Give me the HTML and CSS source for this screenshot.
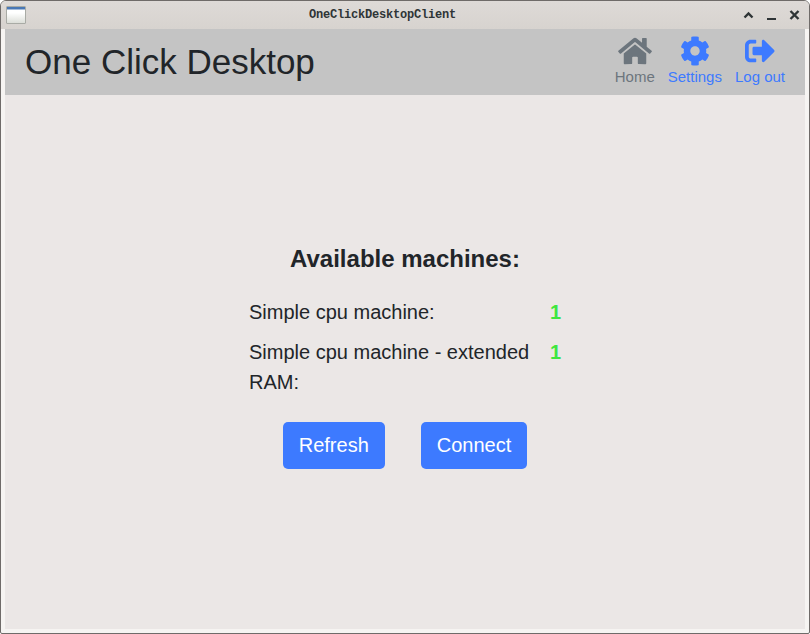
FILE: index.html
```html
<!DOCTYPE html>
<html lang="en">
<head>
<meta charset="utf-8">
<title>OneClickDesktopClient</title>
<link rel="stylesheet" href="styles.css">
</head>
<body>
<div class="window">
  <div class="titlebar">
    <span class="app-icon"></span>
    <span class="window-title">OneClickDesktopClient</span>
    <svg class="controls" width="60" height="12" viewBox="0 0 60 12" fill="none" stroke="#2e3436">
      <path d="M1.500 8.500 5.500 4.500 9.500 8.500" stroke-width="2.400"/>
      <path d="M24 10h9" stroke-width="2"/>
      <path d="M47.500 2l8 8M55.500 2l-8 8" stroke-width="2.400"/>
    </svg>
  </div>
  <div class="client">
    <header class="header">
      <h1 class="brand">One Click Desktop</h1>
      <nav class="nav">
        <a class="nav-item active">
          <svg width="34" height="30" viewBox="0 0 576 512"><path d="M280.370 148.260L96 300.110V464a16 16 0 0 0 16 16l112.060-.29a16 16 0 0 0 15.920-16V368a16 16 0 0 1 16-16h64a16 16 0 0 1 16 16v95.640a16 16 0 0 0 16 16.050L464 480a16 16 0 0 0 16-16V300L295.670 148.260a12.190 12.190 0 0 0-15.300 0zM571.600 251.470L488 182.560V44.050a12 12 0 0 0-12-12h-56a12 12 0 0 0-12 12v72.610L318.470 43a48 48 0 0 0-61 0L4.340 251.470a12 12 0 0 0-1.600 16.900l25.500 31A12 12 0 0 0 45.150 301l235.220-193.740a12.190 12.190 0 0 1 15.300 0L530.900 301a12 12 0 0 0 16.900-1.600l25.500-31a12 12 0 0 0-1.700-16.930z"/></svg>
          <span>Home</span>
        </a>
        <a class="nav-item">
          <svg width="30" height="30" viewBox="0 0 512 512"><path d="M487.400 315.700l-42.600-24.600c4.300-23.200 4.300-47 0-70.200l42.600-24.600c4.900-2.800 7.100-8.600 5.500-14-11.100-35.600-30-67.800-54.700-94.600-3.800-4.100-10-5.100-14.800-2.300L380.800 110c-17.900-15.400-38.500-27.300-60.800-35.100V25.800c0-5.600-3.900-10.500-9.400-11.700-36.700-8.200-74.300-7.800-109.200 0-5.500 1.200-9.400 6.100-9.400 11.700V75c-22.200 7.900-42.800 19.800-60.800 35.100L88.700 85.500c-4.900-2.800-11-1.900-14.800 2.300-24.700 26.700-43.600 58.900-54.700 94.600-1.700 5.400.6 11.200 5.500 14L67.300 221c-4.300 23.200-4.300 47 0 70.200l-42.600 24.600c-4.900 2.800-7.100 8.600-5.500 14 11.100 35.600 30 67.800 54.700 94.600 3.800 4.100 10 5.100 14.800 2.300l42.600-24.600c17.900 15.400 38.500 27.300 60.800 35.100v49.200c0 5.600 3.900 10.500 9.400 11.700 36.700 8.200 74.300 7.800 109.200 0 5.500-1.200 9.400-6.100 9.400-11.700v-49.200c22.200-7.900 42.800-19.800 60.800-35.100l42.600 24.600c4.900 2.800 11 1.900 14.800-2.300 24.700-26.700 43.600-58.900 54.700-94.600 1.500-5.500-.7-11.300-5.600-14.100zM256 336c-44.100 0-80-35.900-80-80s35.900-80 80-80 80 35.900 80 80-35.900 80-80 80z"/></svg>
          <span>Settings</span>
        </a>
        <a class="nav-item">
          <svg width="30" height="30" viewBox="0 0 512 512"><path d="M497 273L329 441c-15 15-41 4.500-41-17v-96H152c-13.300 0-24-10.700-24-24v-96c0-13.300 10.700-24 24-24h136V88c0-21.400 25.900-32 41-17l168 168c9.300 9.400 9.300 24.600 0 34zM192 436v-40c0-6.600-5.400-12-12-12H96c-17.700 0-32-14.300-32-32V160c0-17.700 14.300-32 32-32h84c6.600 0 12-5.400 12-12V76c0-6.600-5.400-12-12-12H96c-53 0-96 43-96 96v192c0 53 43 96 96 96h84c6.600 0 12-5.400 12-12z"/></svg>
          <span>Log out</span>
        </a>
      </nav>
    </header>
    <main class="main">
      <h2 class="heading">Available machines:</h2>
      <div class="machines">
        <span>Simple cpu machine:</span><b>1</b>
        <span>Simple cpu machine - extended RAM:</span><b>1</b>
      </div>
      <div class="actions">
        <button class="button">Refresh</button>
        <button class="button">Connect</button>
      </div>
    </main>
  </div>
</div>
</body>
</html>
```
FILE: styles.css
```css
* { box-sizing: border-box; }
body {
  margin: 0;
  background: #fff;
  color: #212529;
  font-family: "Liberation Sans", Arial, sans-serif;
}
.window {
  width: 810px;
  height: 634px;
  border: 1px solid #6f6b69;
  border-radius: 6px 6px 2px 2px;
  background: #f6f4f2;
  overflow: hidden;
}
.titlebar {
  height: 28px;
  display: grid;
  grid-template-columns: 303px auto 1fr;
  align-items: center;
  padding: 0 6px 0 5px;
  background: linear-gradient(#dedad7, #d7d3cf);
}
.app-icon {
  width: 20px;
  height: 18px;
  border: 1px solid #a9aba5;
  border-radius: 1px;
  background: linear-gradient(#4a78b5 0 2px, #fff 3px, #fff 6px, #dcded8);
}
.window-title {
  font: bold 12px/14px "Liberation Mono", monospace;
  letter-spacing: -0.200px;
  color: #2e3436;
}
.controls { justify-self: end; }
.client {
  height: 600px;
  margin: 0 4px;
  display: flex;
  flex-direction: column;
  background: #ebe7e6;
}
.header {
  height: 66px;
  display: flex;
  align-items: center;
  justify-content: space-between;
  padding: 0 20px;
  background: #c4c4c4;
}
.brand {
  margin: 0;
  font-size: 35px;
  font-weight: 400;
  line-height: 42px;
}
.nav {
  display: flex;
  gap: 13px;
}
.nav-item {
  display: flex;
  flex-direction: column;
  align-items: center;
  font-size: 15px;
  line-height: 22px;
  color: #3d7aff;
}
.nav-item svg { fill: currentColor; }
.nav-item.active { color: #6c757d; }
.main {
  flex: 1;
  display: flex;
  flex-direction: column;
  align-items: center;
  justify-content: center;
  padding-bottom: 12px;
  font-size: 20px;
  line-height: 30px;
}
.heading {
  margin: 0 0 23px;
  font-size: 24px;
  line-height: 30px;
}
.machines {
  width: 312px;
  display: grid;
  grid-template-columns: 285px auto;
  justify-content: space-between;
  row-gap: 10px;
}
.machines b { color: #3fe63f; }
.actions {
  display: flex;
  gap: 36px;
  margin-top: 25px;
}
.button {
  height: 47px;
  padding: 0 16px;
  border: 0;
  border-radius: 5px;
  background: #3d7aff;
  color: #fff;
  font: inherit;
}
```
